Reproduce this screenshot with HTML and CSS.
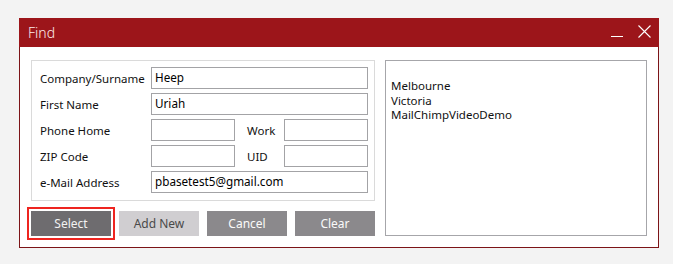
FILE: index.html
```html
<!DOCTYPE html>
<html>
<head>
<meta charset="utf-8">
<link rel="stylesheet" href="styles.css">
</head>
<body>
<div class="window">
  <div class="titlebar">
    <span class="title">Find</span>
    <div class="controls">
      <svg class="min" width="12" height="12" viewBox="0 0 12 12"><line x1="0" y1="10.5" x2="12" y2="10.5" stroke="#fff" stroke-width="1"/></svg>
      <svg class="close" width="13" height="13" viewBox="0 0 13 13"><path d="M0.5 0.5 L12.5 12.5 M12.5 0.5 L0.5 12.5" stroke="#fff" stroke-width="1.1" fill="none"/></svg>
    </div>
  </div>
  <div class="content">
    <div class="leftcol">
      <div class="group">
        <label class="lbl">Company/Surname</label>
        <div class="field span3">Heep</div>
        <label class="lbl">First Name</label>
        <div class="field span3">Uriah</div>
        <label class="lbl">Phone Home</label>
        <div class="field"></div>
        <label class="lbl sub">Work</label>
        <div class="field"></div>
        <label class="lbl">ZIP Code</label>
        <div class="field"></div>
        <label class="lbl sub">UID</label>
        <div class="field"></div>
        <label class="lbl">e-Mail Address</label>
        <div class="field span3">pbasetest5@gmail.com</div>
      </div>
      <div class="buttons">
        <button class="btn select">Select</button>
        <button class="btn addnew">Add New</button>
        <button class="btn dark">Cancel</button>
        <button class="btn dark">Clear</button>
      </div>
    </div>
    <div class="results">
      <div class="line">Melbourne</div>
      <div class="line">Victoria</div>
      <div class="line">MailChimpVideoDemo</div>
    </div>
  </div>
</div>
</body>
</html>
```
FILE: styles.css
```css
html, body {
  margin: 0;
  padding: 0;
  background: #f3f3f3;
  font-family: "Noto Sans", "Open Sans", sans-serif;
}
body {
  padding: 18px 0 0 19px;
}
.window {
  width: 640px;
  height: 230px;
  box-sizing: border-box;
  border: 1px solid #7c1417;
  border-top: none;
  background: #fff;
  display: flex;
  flex-direction: column;
}
.titlebar {
  height: 29px;
  margin: 0 -1px;
  background: #9c151a;
  display: flex;
  align-items: center;
  justify-content: space-between;
  padding: 0 8px 0 9px;
}
.title {
  color: #fbeaea;
  font-size: 14px;
  font-weight: 300;
  font-family: "Noto Sans", sans-serif;
  margin-top: -1px;
}
.controls {
  display: flex;
  gap: 15px;
  align-items: center;
  margin-top: -2px;
}
.content {
  display: flex;
  padding: 13px 0 0 11px;
  gap: 10px;
}
.leftcol {
  display: flex;
  flex-direction: column;
}
.group {
  width: 344px;
  height: 141px;
  box-sizing: border-box;
  border: 1px solid #dadada;
  padding: 6px 6px 0 8px;
  display: grid;
  grid-template-columns: 111px 84px 49px 84px;
  grid-auto-rows: 22px;
  row-gap: 4px;
  align-items: center;
}
.lbl {
  font-size: 11.5px;
  color: #111;
  white-space: nowrap;
}
.lbl.sub {
  padding-left: 12px;
}
.field {
  height: 22px;
  box-sizing: border-box;
  border: 1px solid #a3a3a6;
  font-size: 11.7px;
  color: #000;
  padding: 0 3px;
  line-height: 19px;
  background: #fff;
}
.span3 {
  grid-column: span 3;
}
.buttons {
  display: flex;
  gap: 8px;
  margin-top: 10px;
}
.btn {
  width: 80px;
  height: 25px;
  border: none;
  font-family: "Noto Sans", sans-serif;
  font-size: 12px;
  padding: 0;
  color: #fff;
}
.select {
  background: #6e6c6f;
  outline: 2px solid #ee2520;
  outline-offset: 2px;
  color: #f2f2f2;
}
.addnew {
  background: #d0ced1;
  color: #4a4a4a;
}
.dark {
  background: #8b898c;
  color: #fafafa;
}
.results {
  width: 262px;
  height: 176px;
  box-sizing: border-box;
  border: 1px solid #a6a6aa;
  padding: 18px 0 0 5px;
  font-size: 11.5px;
  color: #111;
  line-height: 14.5px;
}
```
